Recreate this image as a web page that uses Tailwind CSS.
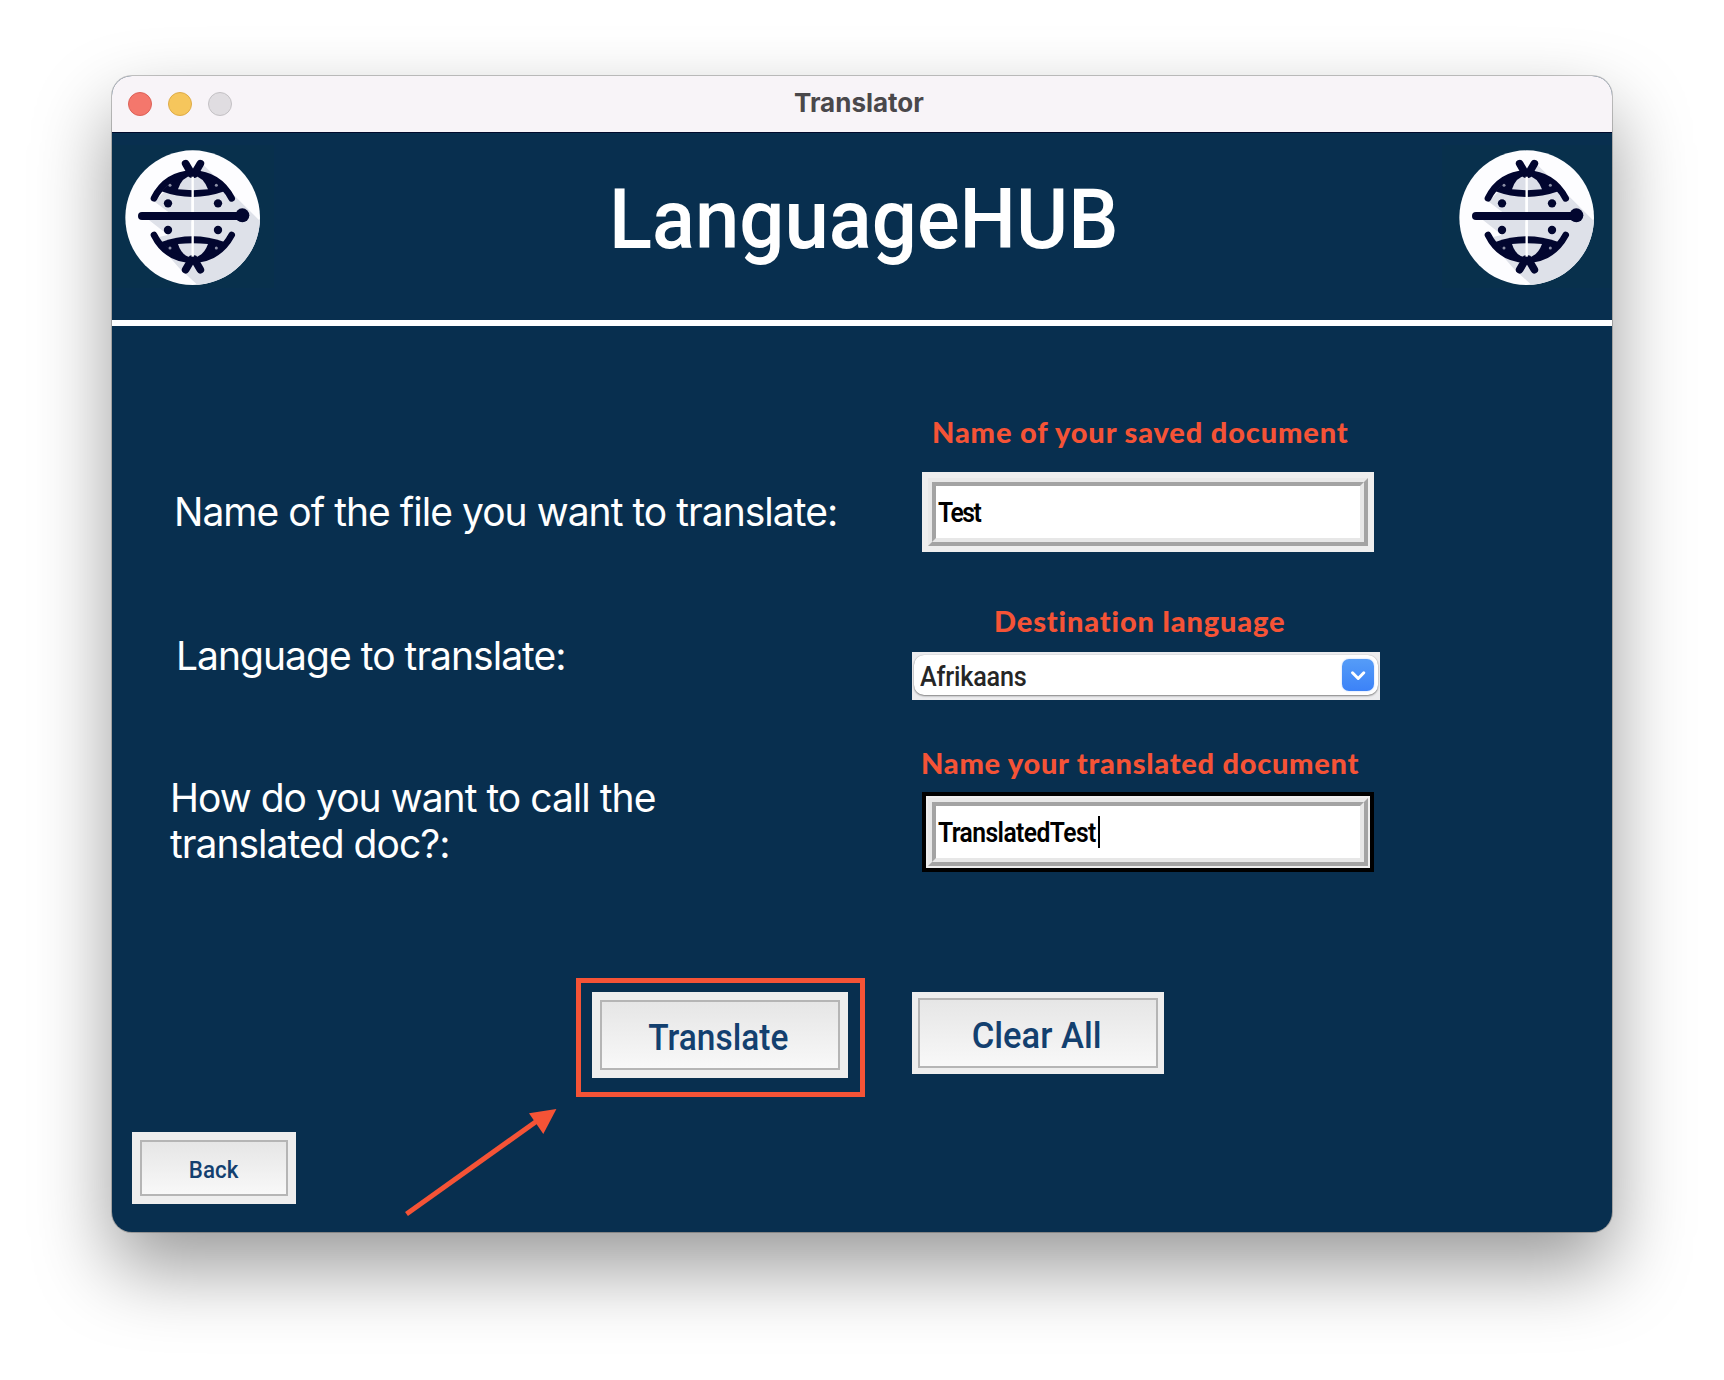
<!DOCTYPE html>
<html lang="en">
<head>
<meta charset="utf-8">
<title>Translator</title>
<script src="https://cdn.jsdelivr.net/npm/@tailwindcss/browser@4"></script>
</head>
<body class="bg-white h-[1380px] overflow-hidden pt-[76px] pl-[112px]">

<svg class="absolute size-0">
  <defs>
    <g id="half">
      <path d="M184 394 Q228 346 278 338 Q330 346 374 394 Q325 411 278 411 Q230 411 184 394Z" fill="#02062f"/>
      <path d="M162 415 Q198 343 278 341 Q356 343 395 415" fill="none" stroke="#02062f" stroke-width="20" stroke-linecap="round"/>
      <path d="M234 388 Q246 349 278 347 Q310 349 324 388 Q278 393 234 388Z" fill="#dcdfe8"/>
      <circle cx="210" cy="376" r="4.5" fill="#8c90a6"/>
      <circle cx="349" cy="376" r="4.5" fill="#8c90a6"/>
      <path d="M257 311 L275 342 M301 311 L283 342" fill="none" stroke="#02062f" stroke-width="23" stroke-linecap="round"/>
      <circle cx="204" cy="430" r="12.5" fill="#02062f"/>
      <circle cx="354" cy="430" r="12.5" fill="#02062f"/>
      <path d="M278 350 V456" stroke="#fff" stroke-width="7"/>
    </g>
    <symbol id="globe" viewBox="60 255 435 435">
      <circle cx="278" cy="473" r="202" fill="#fdfdff"/>
      <path d="M164 425 L240 345 L304 308 L479.7 483 A202 202 0 0 1 292 674.5 L238 625 L160 535 L204 525 L140 475 H204 V455Z" fill="#dee1e9"/>
      <path d="M278 350 V590" stroke="#fff" stroke-width="7"/>
      <use href="#half"/>
      <use href="#half" transform="matrix(1 0 0 -1 0 940)"/>
      <path d="M126 468 H425" stroke="#02062f" stroke-width="24" stroke-linecap="round"/>
      <circle cx="427" cy="466" r="21" fill="#02062f"/>
    </symbol>
  </defs>
</svg>

<main class="relative w-[1500px] h-[1156px] rounded-[20px] overflow-hidden bg-[#082f4f] flex flex-col shadow-[0_0_0_1px_rgba(0,0,0,0.22),0_36px_78px_rgba(0,0,0,0.4)]">

  <!-- Title bar -->
  <header class="h-14 shrink-0 bg-[#f8f4f8] flex items-center px-4">
    <div class="flex gap-4">
      <span class="size-6 rounded-full bg-[#f4776c] border border-[#dc6158]"></span>
      <span class="size-6 rounded-full bg-[#f6c65c] border border-[#deab48]"></span>
      <span class="size-6 rounded-full bg-[#e0dde1] border border-[#c3c0c4]"></span>
    </div>
    <h1 class="ml-[562px] -mt-0.5 font-['Inter',sans-serif] font-bold text-[26px] leading-[34px] text-[#4a484b]">Translator</h1>
  </header>

  <!-- Banner -->
  <section class="h-[188px] shrink-0 border-t border-[#000a2c] flex items-start justify-between">
    <div class="w-[162px] h-[143px] mt-3 pl-2 bg-[#08304c]"><svg class="size-[145px]"><use href="#globe"/></svg></div>
    <h2 class="w-[507px] mt-[37px] ml-[8px] font-['Roboto',sans-serif] font-medium text-[84px] leading-[100px] text-white whitespace-nowrap origin-left scale-x-[0.9485]">LanguageHUB</h2>
    <div class="w-[170px] h-[143px] mt-3 pl-3 bg-[#08304c]"><svg class="size-[145px]"><use href="#globe"/></svg></div>
  </section>
  <div class="h-1.5 shrink-0 bg-white"></div>

  <!-- Form -->
  <section class="h-[666px] shrink-0 flex">
    <div class="w-[800px] shrink-0 pt-[163px] flex flex-col font-['Inter',sans-serif] text-[39px] leading-[46px] tracking-[-0.97px] text-white">
      <label class="pl-[62px]">Name of the file you want to translate:</label>
      <label class="mt-[98px] pl-[64px]">Language to translate:</label>
      <label class="mt-[96px] pl-[58px]">How do you want to call the<br>translated doc?:</label>
    </div>

    <div class="w-[468px] pt-[86px] font-['Roboto',sans-serif]">
      <p class="pl-5 font-['Lato',sans-serif] font-black text-[29px] leading-10 tracking-[0.84px] text-[#f55336] whitespace-nowrap">Name of your saved document</p>
      <div class="mt-5 ml-2.5 w-[452px] h-20 p-1.5 bg-[#eeeeee]">
        <div class="h-full border-4 border-t-[#e8e8e8] border-l-[#e8e8e8] border-b-[#a3a3a3] border-r-[#a3a3a3]">
          <div class="h-full bg-white border-4 border-t-[#a3a3a3] border-l-[#a3a3a3] border-b-[#e7e7e7] border-r-[#e7e7e7] flex items-center pl-0.5">
            <span class="mt-0.5 font-semibold text-[28px] leading-8 text-black tracking-[-1.7px] origin-left scale-x-[0.88]">Test</span>
          </div>
        </div>
      </div>

      <p class="mt-[49px] pl-[82px] font-['Lato',sans-serif] font-black text-[29px] leading-10 tracking-[0.85px] text-[#f55336] whitespace-nowrap">Destination language</p>
      <div class="mt-[11px] h-12 pt-[3px] px-0.5 bg-[#ececee]">
        <div class="h-10 rounded-[10px] bg-white flex items-center justify-between pl-[6px] pr-1 shadow-[0_1px_2px_rgba(0,0,0,0.45),0_0_1px_rgba(0,0,0,0.25)]">
          <span class="mt-[3px] font-medium text-[28px] leading-8 text-[#262626] tracking-[-0.2px] origin-left scale-x-[0.9]">Afrikaans</span>
          <span class="size-8 rounded-[7px] bg-gradient-to-b from-[#559cf8] to-[#3c82f7] grid place-items-center shadow-[0_0_2px_rgba(60,130,247,0.4)]">
            <svg class="size-8" viewBox="0 0 32 32" fill="none" stroke="#fff" stroke-width="3" stroke-linecap="round" stroke-linejoin="round"><path d="M10.5 13.8 L16.2 19.5 L21.8 13.8"/></svg>
          </span>
        </div>
      </div>

      <p class="mt-[43px] pl-[9px] font-['Lato',sans-serif] font-black text-[29px] leading-10 tracking-[0.73px] text-[#f55336] whitespace-nowrap">Name your translated document</p>
      <div class="mt-[9px] ml-2.5 w-[452px] h-20 border-4 border-black p-0.5 bg-[#eeeeee]">
        <div class="h-full border-4 border-t-[#e8e8e8] border-l-[#e8e8e8] border-b-[#a3a3a3] border-r-[#a3a3a3]">
          <div class="h-full bg-white border-4 border-t-[#a3a3a3] border-l-[#a3a3a3] border-b-[#e7e7e7] border-r-[#e7e7e7] flex items-center pl-0.5">
            <span class="w-[160px] mt-0.5 font-semibold text-[28px] leading-8 text-black tracking-[-0.65px] whitespace-nowrap origin-left scale-x-[0.88]">TranslatedTest</span>
            <span class="w-0.5 h-8 bg-black"></span>
          </div>
        </div>
      </div>
    </div>
  </section>

  <!-- Actions -->
  <section class="shrink-0 flex items-start pl-[464px] -mt-[14px] font-['Roboto',sans-serif] font-medium text-[#13406f]">
    <div class="w-[289px] h-[119px] border-[5px] border-[#f55336] pl-[11px] pt-[9px]">
      <button class="w-64 h-[86px] p-2 bg-[#eeeeee]">
        <span class="h-full border-2 border-[#b5b5b5] bg-gradient-to-b from-[#e6e6e6] to-[#f8f8f8] flex items-center justify-center text-[36px] leading-9"><span class="mt-1.5 -ml-1 scale-x-[0.93]">Translate</span></span>
      </button>
    </div>
    <button class="ml-[47px] mt-[14px] w-[252px] h-[82px] p-1.5 bg-[#eeeeee]">
      <span class="h-full border-2 border-[#b5b5b5] bg-gradient-to-b from-[#e6e6e6] to-[#f8f8f8] flex items-center justify-center text-[36px] leading-9"><span class="mt-1.5 -ml-[3px] scale-x-[0.96]">Clear All</span></span>
    </button>
  </section>

  <!-- Footer -->
  <section class="flex items-start pl-5 mt-[35px] font-['Roboto',sans-serif] font-medium text-[#13406f]">
    <button class="w-[164px] h-[72px] p-2 bg-[#eeeeee]">
      <span class="h-full border-2 border-[#b5b5b5] bg-gradient-to-b from-[#e6e6e6] to-[#f8f8f8] flex items-center justify-center text-[24px] leading-6"><span class="mt-[3px] -ml-px scale-x-[0.93]">Back</span></span>
    </button>
  </section>

  <!-- Callout arrow -->
  <svg class="absolute left-[287px] top-[1024px] w-[180px] h-[120px]" viewBox="0 0 180 120" fill="#f55336">
    <path d="M7.5 114 L140 19.5" stroke="#f55336" stroke-width="5"/>
    <path d="M157.4 9 L130 13.3 L144.3 34Z"/>
  </svg>
</main>
</body>
</html>
